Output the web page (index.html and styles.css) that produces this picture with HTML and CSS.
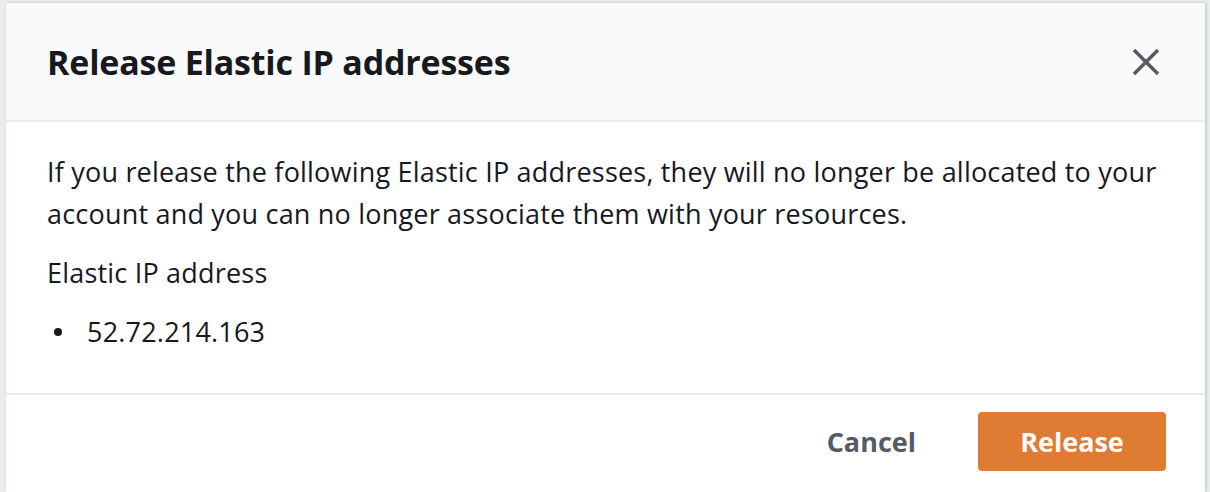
FILE: index.html
```html
<!DOCTYPE html>
<html lang="en">
<head>
  <meta charset="UTF-8" />
  <title>Release Elastic IP addresses</title>
  <link rel="stylesheet" href="styles.css">
</head>
<body>
  <div class="modal">
    <div class="modal-header">
      <h2>Release Elastic IP addresses</h2>
      <button class="close" aria-label="Close">
        <svg width="28" height="28" viewBox="0 0 28 28">
          <path d="M2 2 L26 26 M26 2 L2 26" stroke="#545b64" stroke-width="3.5" fill="none"/>
        </svg>
      </button>
    </div>
    <div class="modal-body">
      <p>If you release the following Elastic IP addresses, they will no longer be allocated to your account and you can no longer associate them with your resources.</p>
      <p class="label">Elastic IP address</p>
      <ul>
        <li>52.72.214.163</li>
      </ul>
    </div>
    <div class="modal-footer">
      <button class="btn-link">Cancel</button>
      <button class="btn-primary">Release</button>
    </div>
  </div>
</body>
</html>
```

FILE: styles.css
```css
body {
  margin: 0;
  background: #eaeded;
  font-family: "Open Sans", sans-serif;
  color: #16191f;
}

.modal {
  margin: 3px 5px 0 6px;
  background: #fff;
  box-shadow: 1px 0 3px rgba(0, 0, 0, 0.2);
  height: 489px;
}

.modal-header {
  display: flex;
  align-items: center;
  justify-content: space-between;
  height: 117px;
  padding: 0 45px 0 41px;
  background: #fafafa;
  border-bottom: 2px solid #eaeded;
}

.modal-header h2 {
  margin: 0;
  font-size: 34px;
  font-weight: 700;
  letter-spacing: -0.2px;
}

.close {
  background: none;
  border: none;
  padding: 0;
  width: 28px;
  height: 28px;
  cursor: pointer;
}

.close svg {
  display: block;
}

.modal-body {
  padding: 29px 41px 0;
  height: 242px;
  border-bottom: 2px solid #eaeded;
  font-size: 27px;
  line-height: 42px;
  letter-spacing: 0.2px;
}

.modal-body p {
  margin: 0;
}

.modal-body .label {
  margin-top: 17px;
}

.modal-body ul {
  margin: 17px 0 0;
  padding: 0;
  list-style: none;
}

.modal-body li {
  display: flex;
  align-items: center;
}

.modal-body li::before {
  content: "";
  width: 8px;
  height: 8px;
  border-radius: 50%;
  background: #16191f;
  margin: 0 25px 0 7px;
}

.modal-footer {
  display: flex;
  justify-content: flex-end;
  align-items: center;
  gap: 62px;
  padding: 17px 39px 0 0;
}

.btn-link {
  background: none;
  border: none;
  font-family: inherit;
  font-size: 27px;
  font-weight: 700;
  color: #545b64;
  padding: 0;
  cursor: pointer;
}

.btn-primary {
  width: 188px;
  height: 59px;
  background: #e07b34;
  border: none;
  border-radius: 4px;
  color: #fff;
  font-family: inherit;
  font-size: 27px;
  font-weight: 700;
  cursor: pointer;
}
```
